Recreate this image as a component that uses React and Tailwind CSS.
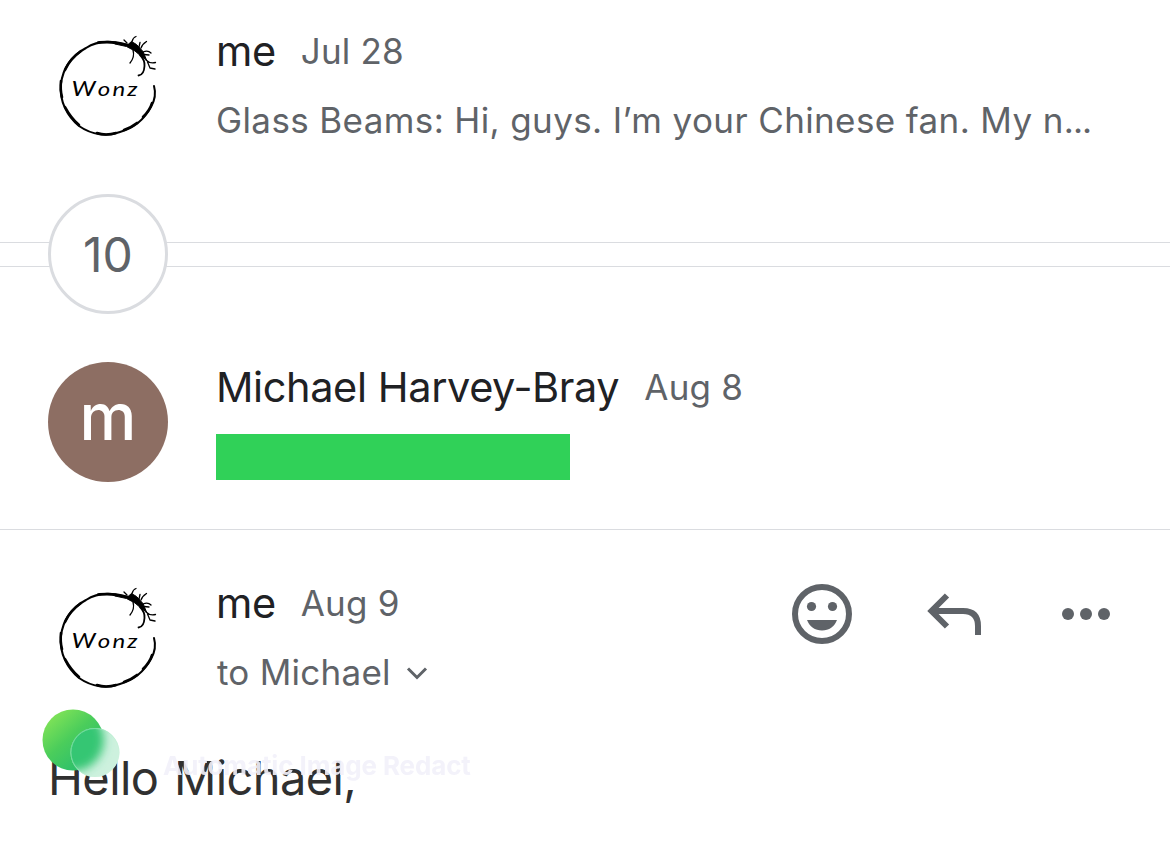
import React from "react";

function WonzAvatar() {
  return (
    <svg viewBox="0 0 120 120" className="h-[120px] w-[120px] shrink-0" role="img" aria-label="Wonz">
      <g fill="none" stroke="#000" strokeLinecap="round" strokeLinejoin="round">
        <path d="M80 19C66 15 50 14 38 22C25 29 15 41 13 58C11 76 20 91 31 100C44 109 59 111 72 106C86 102 97 92 103 81C107 74 108 67 106 60" strokeWidth="2" />
        <path d="M68 17C62 15.500 57 16 50 16.500M33 25Q22 33 17 44M13 55Q12 64 14 71M17 81Q23 92 31 99M49 107Q58 110 68 107M76 104Q84 101 89 97M95 91Q102 84 104 77" strokeWidth="2.6" />
        <path d="M67 16L80 18.500L83.500 15.500L88.500 18.500L95 25.500L98.500 34L93.500 30.500L87 25L78.500 20.500L67 18Z" fill="#000" strokeWidth="1" />
        <path d="M84 15.500Q85 11.500 88 10.500M79 17L76 14M91 21L92 16.500M93 22Q94 18.500 98.500 15.500M95 26Q100 24 103 27M96 28.500L101 29M98 34Q102 38 107.500 36.500M99.500 36L102 42L107 43M85 24Q87 31 82 37" strokeWidth="1.3" />
        <path d="M92 29Q97 34 96.500 40Q96 49 90.500 49.500" strokeWidth="1.8" />
      </g>
      <text transform="translate(23.500 69.500) scale(1.2 1)" textLength="55" lengthAdjust="spacing" className="font-['Lato',sans-serif] text-[20px] italic">
        <tspan className="text-[21px]">W</tspan>onz
      </text>
    </svg>
  );
}

function Heading({ name, date }) {
  return (
    <div className="flex items-start whitespace-nowrap leading-[50px]">
      <span className="text-[41.5px] tracking-[-0.4px] text-[#202124]">{name}</span>
      <span className="ml-[25px] text-[35px] tracking-[0.2px] text-[#5f6368]">{date}</span>
    </div>
  );
}

function Actions() {
  return (
    <div className="flex items-start gap-[72px] pt-1.5 text-[#5f6368]">
      <svg viewBox="0 0 60 60" className="h-[60px] w-[60px]" fill="currentColor">
        <circle cx="30" cy="30" r="27" fill="none" stroke="currentColor" strokeWidth="6" />
        <circle cx="19.5" cy="22.5" r="4.6" />
        <circle cx="40.5" cy="22.5" r="4.6" />
        <path d="M15 36H45C42.500 42.500 37 46.500 30 46.500S17.500 42.500 15 36Z" />
      </svg>
      <svg viewBox="0 0 60 60" className="h-[60px] w-[60px]" fill="none" stroke="currentColor" strokeWidth="6">
        <path d="M23 11.500L7.500 27L23 42.500M8 27H39Q54 27 54 42V51" />
      </svg>
      <svg viewBox="0 0 60 60" className="h-[60px] w-[60px]" fill="currentColor">
        <circle cx="12" cy="30" r="6" />
        <circle cx="30" cy="30" r="6" />
        <circle cx="48" cy="30" r="6" />
      </svg>
    </div>
  );
}

function Watermark() {
  return (
    <div className="pointer-events-none absolute left-[42px] top-[179px] flex">
      <svg viewBox="0 0 80 72" className="h-[72px] w-20 shrink-0">
        <defs>
          <linearGradient id="leaf" x1="0.1" y1="0.1" x2="0.75" y2="0.85">
            <stop offset="0" stopColor="#83e457" />
            <stop offset="0.5" stopColor="#4bcd5b" />
            <stop offset="1" stopColor="#2cbf6c" />
          </linearGradient>
          <linearGradient id="rim" x1="0" y1="0" x2="1" y2="1">
            <stop offset="0" stopColor="#8be8ae" stopOpacity="0.6" />
            <stop offset="1" stopColor="#dff6ea" stopOpacity="0.4" />
          </linearGradient>
          <filter id="soften" x="-30%" y="-30%" width="160%" height="160%">
            <feGaussianBlur stdDeviation="5" />
          </filter>
          <clipPath id="lens"><circle cx="53" cy="43.500" r="24.500" /></clipPath>
        </defs>
        <circle cx="31" cy="31" r="30.500" fill="url(#leaf)" />
        <g clipPath="url(#lens)">
          <rect x="28" y="18" width="52" height="52" fill="#cdf1de" />
          <circle cx="31" cy="31" r="31" fill="#36c673" filter="url(#soften)" />
        </g>
        <circle cx="53" cy="43.500" r="24" fill="none" stroke="url(#rim)" />
      </svg>
      <span className="ml-[41px] mt-[39px] whitespace-nowrap text-[26px] font-bold leading-9 tracking-[-0.12px] text-[#f2f1fa] opacity-90">Automatic Image Redact</span>
    </div>
  );
}

export default function App() {
  return (
    <main className="h-[858px] w-[1170px] overflow-hidden bg-white font-['Inter',sans-serif]">
      <section className="flex h-[242px] gap-12 pl-12 pt-[26px]">
        <WonzAvatar />
        <div>
          <Heading name="me" date="Jul 28" />
          <p className="mt-[19px] whitespace-nowrap text-[35px] leading-[50px] tracking-[0.38px] text-[#5f6368]">
            Glass Beams: Hi, guys. I’m your Chinese fan. My n<span className="tracking-[-1px]">...</span>
          </p>
        </div>
      </section>

      <div className="relative h-[25px] border-y border-[#dadce0]">
        <div className="absolute -top-[49px] left-12 flex h-[120px] w-[120px] items-center justify-center rounded-full border-[3px] border-[#dadce0] bg-white pt-0.5 text-[48px] text-[#5f6368]">10</div>
      </div>

      <section className="flex h-[263px] gap-12 border-b border-[#dadce0] pl-12 pt-[95px]">
        <div className="flex h-[120px] w-[120px] shrink-0 items-center justify-center rounded-full bg-[#8d6e63] pb-2.5 text-[64px] font-medium text-white">m</div>
        <div>
          <Heading name="Michael Harvey-Bray" date="Aug 8" />
          <div className="mt-[22px] h-[46px] w-[354px] bg-[#30d158]" />
        </div>
      </section>

      <section className="relative h-[328px] pt-12">
        <div className="flex pl-12 pr-[54px]">
          <WonzAvatar />
          <div className="ml-12 flex-1">
            <Heading name="me" date="Aug 9" />
            <div className="mt-[19px] flex items-center pl-px text-[35px] leading-[50px] tracking-[0.25px] text-[#5f6368]">
              <span>to Michael</span>
              <svg viewBox="0 0 24 16" className="ml-[14px] mt-0.5 h-4 w-6" fill="none" stroke="currentColor" strokeWidth="3">
                <path d="M3 3.500L12 12.500L21 3.500" />
              </svg>
            </div>
          </div>
          <Actions />
        </div>
        <p className="ml-[48px] mt-[50px] text-[47px] leading-[60px] tracking-[-0.6px] text-[#303030] [word-spacing:3px]">Hello Michael,</p>
        <Watermark />
      </section>
    </main>
  );
}
